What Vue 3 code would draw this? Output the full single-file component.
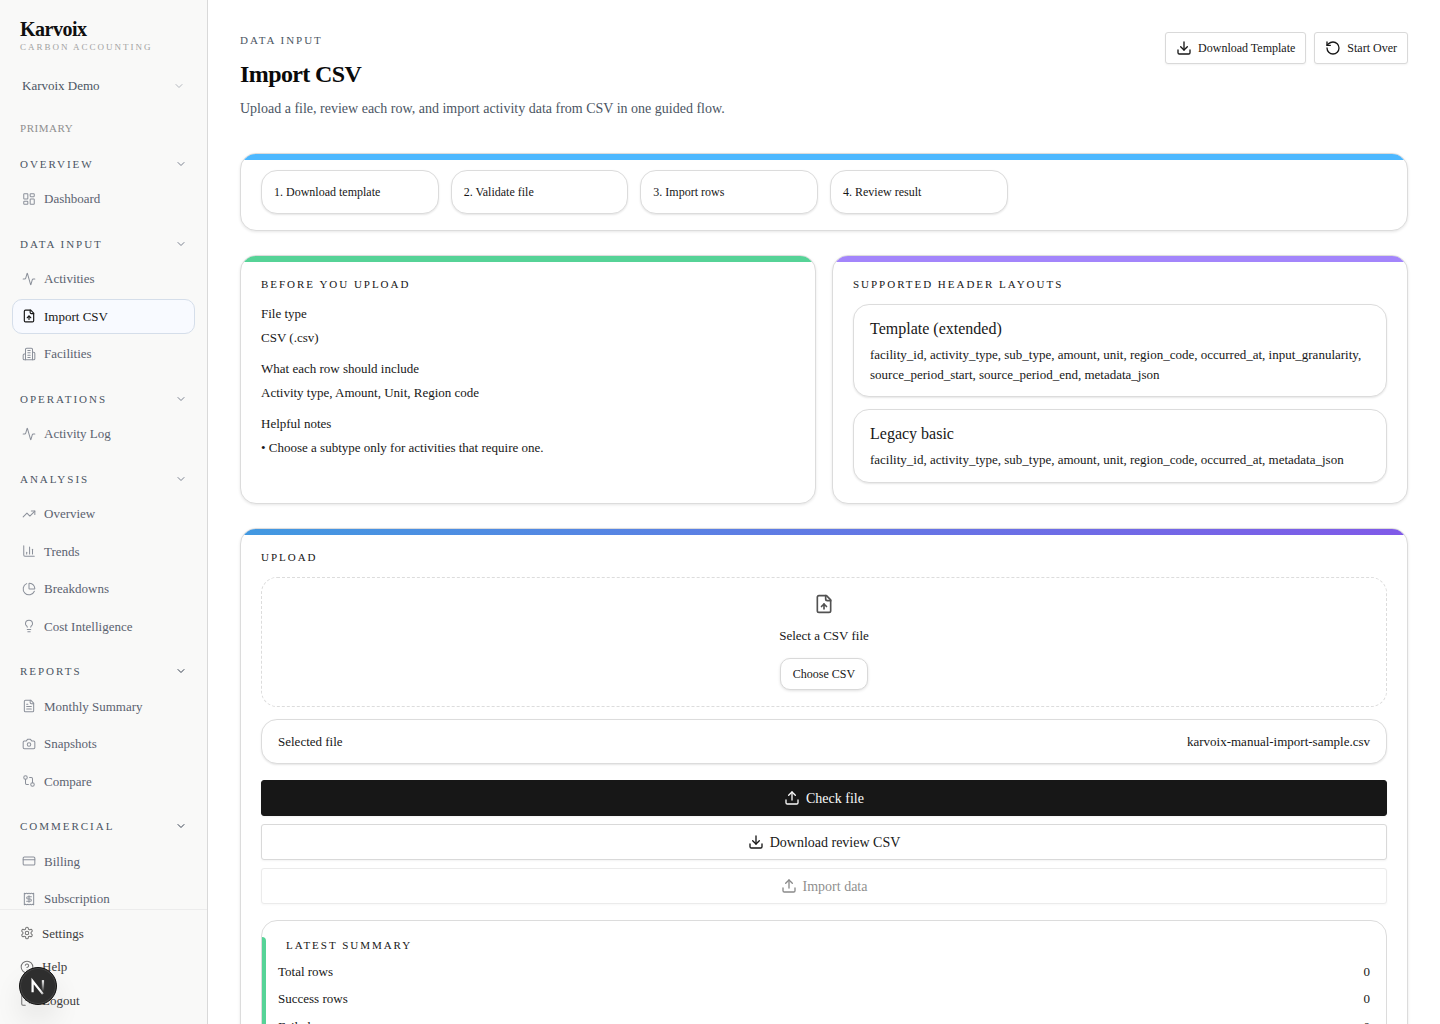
<script setup>
import { ref, reactive } from 'vue'

// 24x24 stroke icons, one entry per path
const icons = {
  chevron: ['m6 9 6 6 6-6'],
  dashboard: ['M4 3h5a1 1 0 0 1 1 1v7a1 1 0 0 1-1 1H4a1 1 0 0 1-1-1V4a1 1 0 0 1 1-1Z', 'M15 3h5a1 1 0 0 1 1 1v3a1 1 0 0 1-1 1h-5a1 1 0 0 1-1-1V4a1 1 0 0 1 1-1Z', 'M15 12h5a1 1 0 0 1 1 1v7a1 1 0 0 1-1 1h-5a1 1 0 0 1-1-1v-7a1 1 0 0 1 1-1Z', 'M4 16h5a1 1 0 0 1 1 1v3a1 1 0 0 1-1 1H4a1 1 0 0 1-1-1v-3a1 1 0 0 1 1-1Z'],
  activity: ['M22 12h-2.48a2 2 0 0 0-1.93 1.46l-2.35 8.36a.25.25 0 0 1-.48 0L9.24 2.18a.25.25 0 0 0-.48 0l-2.35 8.36A2 2 0 0 1 4.49 12H2'],
  fileUp: ['M15 2H6a2 2 0 0 0-2 2v16a2 2 0 0 0 2 2h12a2 2 0 0 0 2-2V7Z', 'M14 2v4a2 2 0 0 0 2 2h4', 'M12 12v6', 'm15 15-3-3-3 3'],
  building: ['M6 22V4a2 2 0 0 1 2-2h8a2 2 0 0 1 2 2v18Z', 'M6 12H4a2 2 0 0 0-2 2v6a2 2 0 0 0 2 2h2', 'M18 9h2a2 2 0 0 1 2 2v9a2 2 0 0 1-2 2h-2', 'M10 6h4', 'M10 10h4', 'M10 14h4', 'M10 18h4'],
  trending: ['m22 7-8.5 8.5-5-5L2 17', 'M16 7h6v6'],
  bars: ['M3 3v16a2 2 0 0 0 2 2h16', 'M18 17V9', 'M13 17V5', 'M8 17v-3'],
  pie: ['M21 12c.552 0 1.005-.449.95-.998a10 10 0 0 0-8.953-8.951c-.55-.055-.998.398-.998.95v8a1 1 0 0 0 1 1z', 'M21.21 15.89A10 10 0 1 1 8 2.83'],
  bulb: ['M15 14c.2-1 .7-1.7 1.5-2.5 1-.9 1.5-2.2 1.5-3.5A6 6 0 0 0 6 8c0 1 .2 2.2 1.5 3.5.7.7 1.3 1.5 1.5 2.5', 'M9 18h6', 'M10 22h4'],
  fileText: ['M15 2H6a2 2 0 0 0-2 2v16a2 2 0 0 0 2 2h12a2 2 0 0 0 2-2V7Z', 'M14 2v4a2 2 0 0 0 2 2h4', 'M10 9H8', 'M16 13H8', 'M16 17H8'],
  camera: ['M14.5 4h-5L7 7H4a2 2 0 0 0-2 2v9a2 2 0 0 0 2 2h16a2 2 0 0 0 2-2V9a2 2 0 0 0-2-2h-3l-2.5-3z', 'M12 10a3 3 0 1 0 0 6 3 3 0 0 0 0-6Z'],
  compare: ['M18 15a3 3 0 1 0 0 6 3 3 0 0 0 0-6Z', 'M6 3a3 3 0 1 0 0 6 3 3 0 0 0 0-6Z', 'M13 6h3a2 2 0 0 1 2 2v7', 'M11 18H8a2 2 0 0 1-2-2V9'],
  card: ['M4 5h16a2 2 0 0 1 2 2v10a2 2 0 0 1-2 2H4a2 2 0 0 1-2-2V7a2 2 0 0 1 2-2Z', 'M2 10h20'],
  receipt: ['M4 2v20l2-1 2 1 2-1 2 1 2-1 2 1 2-1 2 1V2l-2 1-2-1-2 1-2-1-2 1-2-1-2 1Z', 'M16 8h-6a2 2 0 1 0 0 4h4a2 2 0 1 1 0 4H8', 'M12 17.5v-11'],
  settings: ['M12.22 2h-.44a2 2 0 0 0-2 2v.18a2 2 0 0 1-1 1.73l-.43.25a2 2 0 0 1-2 0l-.15-.08a2 2 0 0 0-2.73.73l-.22.38a2 2 0 0 0 .73 2.73l.15.1a2 2 0 0 1 1 1.72v.51a2 2 0 0 1-1 1.74l-.15.09a2 2 0 0 0-.73 2.73l.22.38a2 2 0 0 0 2.73.73l.15-.08a2 2 0 0 1 2 0l.43.25a2 2 0 0 1 1 1.73V20a2 2 0 0 0 2 2h.44a2 2 0 0 0 2-2v-.18a2 2 0 0 1 1-1.73l.43-.25a2 2 0 0 1 2 0l.15.08a2 2 0 0 0 2.73-.73l.22-.39a2 2 0 0 0-.73-2.73l-.15-.08a2 2 0 0 1-1-1.74v-.5a2 2 0 0 1 1-1.74l.15-.09a2 2 0 0 0 .73-2.73l-.22-.38a2 2 0 0 0-2.73-.73l-.15.08a2 2 0 0 1-2 0l-.43-.25a2 2 0 0 1-1-1.73V4a2 2 0 0 0-2-2z', 'M12 9a3 3 0 1 0 0 6 3 3 0 0 0 0-6Z'],
  help: ['M12 2a10 10 0 1 0 0 20 10 10 0 0 0 0-20Z', 'M9.09 9a3 3 0 0 1 5.83 1c0 2-3 3-3 3', 'M12 17h.01'],
  logout: ['M9 21H5a2 2 0 0 1-2-2V5a2 2 0 0 1 2-2h4', 'm16 17 5-5-5-5', 'M21 12H9'],
  download: ['M21 15v4a2 2 0 0 1-2 2H5a2 2 0 0 1-2-2v-4', 'm7 10 5 5 5-5', 'M12 15V3'],
  upload: ['M21 15v4a2 2 0 0 1-2 2H5a2 2 0 0 1-2-2v-4', 'm17 8-5-5-5 5', 'M12 3v12'],
  reset: ['M3 12a9 9 0 1 0 9-9 9.75 9.75 0 0 0-6.74 2.74L3 8', 'M3 3v5h5']
}

const sections = reactive([
  { title: 'Overview', open: true, items: [{ label: 'Dashboard', icon: 'dashboard' }] },
  {
    title: 'Data Input',
    open: true,
    items: [
      { label: 'Activities', icon: 'activity' },
      { label: 'Import CSV', icon: 'fileUp', active: true },
      { label: 'Facilities', icon: 'building' }
    ]
  },
  { title: 'Operations', open: true, items: [{ label: 'Activity Log', icon: 'activity' }] },
  {
    title: 'Analysis',
    open: true,
    items: [
      { label: 'Overview', icon: 'trending' },
      { label: 'Trends', icon: 'bars' },
      { label: 'Breakdowns', icon: 'pie' },
      { label: 'Cost Intelligence', icon: 'bulb' }
    ]
  },
  {
    title: 'Reports',
    open: true,
    strong: true,
    items: [
      { label: 'Monthly Summary', icon: 'fileText' },
      { label: 'Snapshots', icon: 'camera' },
      { label: 'Compare', icon: 'compare' }
    ]
  },
  {
    title: 'Commercial',
    open: true,
    strong: true,
    items: [
      { label: 'Billing', icon: 'card' },
      { label: 'Subscription', icon: 'receipt' }
    ]
  }
])

const footerLinks = [
  { label: 'Settings', icon: 'settings' },
  { label: 'Help', icon: 'help' },
  { label: 'Logout', icon: 'logout' }
]

const steps = ['Download template', 'Validate file', 'Import rows', 'Review result']

const notes = [
  { term: 'File type', text: 'CSV (.csv)' },
  { term: 'What each row should include', text: 'Activity type, Amount, Unit, Region code' },
  { term: 'Helpful notes', text: '• Choose a subtype only for activities that require one.' }
]

const layouts = [
  {
    name: 'Template (extended)',
    columns: 'facility_id, activity_type, sub_type, amount, unit, region_code, occurred_at, input_granularity, source_period_start, source_period_end, metadata_json'
  },
  {
    name: 'Legacy basic',
    columns: 'facility_id, activity_type, sub_type, amount, unit, region_code, occurred_at, metadata_json'
  }
]

const summary = [
  { label: 'Total rows', value: 0 },
  { label: 'Success rows', value: 0 },
  { label: 'Failed rows', value: 0 }
]

const fileInput = ref(null)
const fileName = ref('karvoix-manual-import-sample.csv')

function onFileChange(e) {
  const file = e.target.files[0]
  if (file) fileName.value = file.name
}
</script>

<template>
  <div class="app">
    <aside class="sidebar">
      <div class="brand">
        <div class="brand-name">Karvoix</div>
        <div class="brand-sub">CARBON ACCOUNTING</div>
      </div>

      <button type="button" class="org">
        <span>Karvoix Demo</span>
        <svg class="icon chevron" viewBox="0 0 24 24"><path v-for="d in icons.chevron" :key="d" :d="d" /></svg>
      </button>

      <nav class="nav">
        <div class="nav-label">PRIMARY</div>
        <div v-for="section in sections" :key="section.title" class="nav-section">
          <button type="button" class="nav-heading" :class="{ strong: section.strong }" @click="section.open = !section.open">
            <span>{{ section.title }}</span>
            <svg class="icon chevron" viewBox="0 0 24 24"><path v-for="d in icons.chevron" :key="d" :d="d" /></svg>
          </button>
          <div v-if="section.open" class="nav-items">
            <a v-for="item in section.items" :key="item.label" href="#" class="nav-item" :class="{ active: item.active }">
              <svg class="icon nav-icon" viewBox="0 0 24 24"><path v-for="d in icons[item.icon]" :key="d" :d="d" /></svg>
              {{ item.label }}
            </a>
          </div>
        </div>
      </nav>

      <div class="sidebar-footer">
        <a v-for="link in footerLinks" :key="link.label" href="#" class="footer-link">
          <svg class="icon nav-icon" viewBox="0 0 24 24"><path v-for="d in icons[link.icon]" :key="d" :d="d" /></svg>
          {{ link.label }}
        </a>
      </div>
    </aside>

    <main class="main">
      <header class="page-header">
        <div>
          <div class="eyebrow">DATA INPUT</div>
          <h1>Import CSV</h1>
          <p class="subtitle">Upload a file, review each row, and import activity data from CSV in one guided flow.</p>
        </div>
        <div class="header-actions">
          <button type="button" class="btn btn-sm">
            <svg class="icon btn-icon" viewBox="0 0 24 24"><path v-for="d in icons.download" :key="d" :d="d" /></svg>
            Download Template
          </button>
          <button type="button" class="btn btn-sm">
            <svg class="icon btn-icon" viewBox="0 0 24 24"><path v-for="d in icons.reset" :key="d" :d="d" /></svg>
            Start Over
          </button>
        </div>
      </header>

      <section class="card card-blue card-steps">
        <div class="steps">
          <div v-for="(step, i) in steps" :key="step" class="box step">{{ i + 1 }}. {{ step }}</div>
        </div>
      </section>

      <div class="columns">
        <section class="card card-green">
          <h2>BEFORE YOU UPLOAD</h2>
          <dl class="notes">
            <div v-for="note in notes" :key="note.term" class="note">
              <dt>{{ note.term }}</dt>
              <dd>{{ note.text }}</dd>
            </div>
          </dl>
        </section>

        <section class="card card-purple">
          <h2>SUPPORTED HEADER LAYOUTS</h2>
          <div class="layouts">
            <div v-for="layout in layouts" :key="layout.name" class="box layout">
              <h3>{{ layout.name }}</h3>
              <p>{{ layout.columns }}</p>
            </div>
          </div>
        </section>
      </div>

      <section class="card card-gradient">
        <h2>UPLOAD</h2>
        <div class="dropzone">
          <svg class="icon drop-icon" viewBox="0 0 24 24"><path v-for="d in icons.fileUp" :key="d" :d="d" /></svg>
          <label for="csv-file">Select a CSV file</label>
          <input id="csv-file" ref="fileInput" type="file" accept=".csv" hidden @change="onFileChange" />
          <button type="button" class="btn btn-sm btn-round" @click="fileInput.click()">Choose CSV</button>
        </div>

        <div class="box selected">
          <span>Selected file</span>
          <span>{{ fileName }}</span>
        </div>

        <div class="actions">
          <button type="button" class="btn btn-primary">
            <svg class="icon btn-icon" viewBox="0 0 24 24"><path v-for="d in icons.upload" :key="d" :d="d" /></svg>
            Check file
          </button>
          <button type="button" class="btn">
            <svg class="icon btn-icon" viewBox="0 0 24 24"><path v-for="d in icons.download" :key="d" :d="d" /></svg>
            Download review CSV
          </button>
          <button type="button" class="btn" disabled>
            <svg class="icon btn-icon" viewBox="0 0 24 24"><path v-for="d in icons.upload" :key="d" :d="d" /></svg>
            Import data
          </button>
        </div>

        <div class="box summary">
          <h2>LATEST SUMMARY</h2>
          <dl>
            <div v-for="row in summary" :key="row.label" class="summary-row">
              <dt>{{ row.label }}</dt>
              <dd>{{ row.value }}</dd>
            </div>
          </dl>
        </div>
      </section>
    </main>

    <button type="button" class="dev-badge" aria-label="Dev tools">
      <svg viewBox="0 0 40 40" fill="none">
        <defs>
          <linearGradient id="n-diag" x1="22" y1="24" x2="27" y2="30" gradientUnits="userSpaceOnUse">
            <stop stop-color="#fff" />
            <stop offset="0.6" stop-color="#fff" stop-opacity="0.8" />
            <stop offset="1" stop-color="#fff" stop-opacity="0" />
          </linearGradient>
          <linearGradient id="n-stem" x1="26" y1="13" x2="26" y2="26" gradientUnits="userSpaceOnUse">
            <stop stop-color="#fff" />
            <stop offset="1" stop-color="#fff" stop-opacity="0" />
          </linearGradient>
        </defs>
        <path d="M14 27V14.5L25.5 29" stroke="url(#n-diag)" stroke-width="2.5" />
        <path d="M25.5 13.5V26" stroke="url(#n-stem)" stroke-width="2.5" />
      </svg>
    </button>
  </div>
</template>

<style>
body {
  margin: 0;
}
</style>

<style scoped>
* {
  box-sizing: border-box;
}

.app {
  display: flex;
  height: 100vh;
  background: #fff;
  color: #171717;
  font-family: 'Liberation Serif', 'Times New Roman', serif;
  font-size: 13px;
  line-height: 1.5;
}

h1, h2, h3, p, dl, dd {
  margin: 0;
}

button {
  font: inherit;
  color: inherit;
  cursor: pointer;
}

a {
  color: inherit;
  text-decoration: none;
}

.icon {
  flex-shrink: 0;
  fill: none;
  stroke: currentColor;
  stroke-width: 2;
  stroke-linecap: round;
  stroke-linejoin: round;
}

/* Sidebar */
.sidebar {
  display: flex;
  flex-direction: column;
  flex-shrink: 0;
  width: 208px;
  padding-top: 16px;
  background: #f9f9f8;
  border-right: 1px solid #d9d9d9;
}

.brand {
  padding: 0 20px;
}

.brand-name {
  font-size: 20px;
  font-weight: 600;
  line-height: 26px;
  letter-spacing: -0.025em;
  color: #0f0f0f;
}

.brand-sub {
  font-size: 9px;
  line-height: 10px;
  letter-spacing: 0.22em;
  color: #a1a1a1;
}

.org {
  display: flex;
  align-items: center;
  justify-content: space-between;
  margin: 16px 12px 0;
  padding: 8px 10px;
  border: 0;
  background: none;
  color: #4b5563;
}

.org .chevron {
  color: #b4b8bf;
}

.chevron {
  width: 12px;
  height: 12px;
}

.nav {
  flex: 1;
  min-height: 0;
  padding: 16px 12px;
  overflow-y: auto;
  scrollbar-width: none;
}

.nav-label {
  margin-bottom: 16px;
  padding: 0 8px;
  font-size: 11px;
  line-height: 17px;
  letter-spacing: 0.05em;
  color: #8f8f8f;
}

.nav-section {
  margin-bottom: 16px;
}

.nav-heading {
  display: flex;
  align-items: center;
  justify-content: space-between;
  width: 100%;
  margin-bottom: 5px;
  padding: 3px 8px 4px;
  border: 0;
  background: none;
  font-size: 11px;
  letter-spacing: 0.18em;
  text-transform: uppercase;
  color: #4b5563;
}

.nav-heading .chevron {
  color: #7b8290;
}

.nav-heading.strong .chevron {
  color: #374151;
}

.nav-items {
  display: flex;
  flex-direction: column;
  gap: 2px;
}

.nav-item {
  display: flex;
  align-items: center;
  gap: 8px;
  padding: 7px 9px;
  border: 1px solid transparent;
  border-radius: 10px;
  color: #5b6270;
}

.nav-icon {
  width: 14px;
  height: 14px;
  stroke-width: 1.75;
  color: #8b909a;
}

.nav-item.active {
  border-color: #d5deea;
  background: #f8faff;
  color: #171717;
}

.nav-item.active .nav-icon {
  stroke-width: 2;
  color: #171717;
}

.sidebar-footer {
  display: flex;
  flex-direction: column;
  gap: 2px;
  padding: 8px 12px;
  border-top: 1px solid #ececec;
}

.footer-link {
  display: flex;
  align-items: center;
  gap: 8px;
  padding: 6px 8px;
  color: #404040;
}

.footer-link .nav-icon {
  color: #737373;
}

/* Page */
.main {
  flex: 1;
  min-width: 0;
  padding: 32px;
  overflow-y: auto;
  scrollbar-width: none;
}

.page-header {
  display: flex;
  align-items: flex-start;
  justify-content: space-between;
  margin-bottom: 32px;
}

.eyebrow {
  font-size: 11px;
  letter-spacing: 0.18em;
  color: #4b5563;
}

h1 {
  margin: 8px 0 6px;
  font-size: 24px;
  font-weight: 700;
  line-height: 34px;
  letter-spacing: -0.025em;
  color: #0a0a0a;
}

.subtitle {
  font-size: 14px;
  line-height: 24px;
  color: #4b5563;
}

.header-actions {
  display: flex;
  gap: 8px;
}

.btn {
  display: flex;
  align-items: center;
  justify-content: center;
  gap: 6px;
  height: 36px;
  padding: 0 16px;
  border: 1px solid #d9d9d9;
  border-radius: 3px;
  background: #fff;
  box-shadow: 0 1px 2px rgba(0, 0, 0, 0.05);
  font-size: 14px;
}

.btn-sm {
  height: 32px;
  padding: 0 10px;
  font-size: 12px;
}

.btn-round {
  padding: 0 12px;
  border-radius: 10px;
  box-shadow: 0 1px 3px rgba(0, 0, 0, 0.12);
}

.btn-primary {
  border-color: #171717;
  background: #171717;
  color: #fafafa;
}

.btn:disabled {
  opacity: 0.5;
  cursor: default;
}

.btn-icon {
  width: 16px;
  height: 16px;
}

.card {
  position: relative;
  padding: 20px;
  border: 1px solid #dcdcdc;
  border-radius: 16px;
  background: #fff;
  box-shadow: 0 1px 3px rgba(0, 0, 0, 0.1);
  overflow: hidden;
}

/* colored strip along the top edge */
.card::before {
  content: '';
  position: absolute;
  top: 0;
  left: 0;
  right: 0;
  height: 6px;
}

.card-blue::before { background: #4db8ff; }
.card-green::before { background: #56d397; }
.card-purple::before { background: #a385fb; }
.card-gradient::before { background: linear-gradient(90deg, #4299e1, #805ae8); }

.card-steps {
  padding: 16px 20px;
}

.card h2 {
  font-size: 11px;
  font-weight: 400;
  letter-spacing: 0.18em;
}

.box {
  border: 1px solid #dcdcdc;
  border-radius: 16px;
  background: #fff;
  box-shadow: 0 1px 2px rgba(0, 0, 0, 0.1);
}

.steps {
  display: grid;
  grid-template-columns: repeat(6, 1fr);
  gap: 12px;
}

.step {
  padding: 12px;
  font-size: 12px;
}

.columns {
  display: grid;
  grid-template-columns: 1fr 1fr;
  gap: 16px;
  margin: 24px 0;
}

.notes,
.layouts {
  display: flex;
  flex-direction: column;
  gap: 12px;
  margin-top: 12px;
}

.note dd {
  margin-top: 4px;
}

.layout {
  padding: 12px 16px;
}

.layout h3 {
  margin-bottom: 4px;
  font-size: 16px;
  font-weight: 400;
}

.dropzone {
  display: flex;
  flex-direction: column;
  align-items: center;
  gap: 12px;
  margin: 12px 0;
  padding: 16px;
  border: 1px dashed #dcdcdc;
  border-radius: 16px;
}

.drop-icon {
  width: 20px;
  height: 20px;
  color: #525252;
}

.selected {
  display: flex;
  justify-content: space-between;
  padding: 12px 16px;
}

.actions {
  display: flex;
  flex-direction: column;
  gap: 8px;
  margin: 16px 0;
}

.summary {
  position: relative;
  padding: 16px;
  box-shadow: none;
}

.summary::before {
  content: '';
  position: absolute;
  top: 16px;
  bottom: 16px;
  left: 0;
  width: 4px;
  border-radius: 0 4px 4px 0;
  background: #56d397;
}

.summary h2 {
  padding-left: 8px;
}

.summary-row {
  display: flex;
  justify-content: space-between;
  margin-top: 8px;
}

.dev-badge {
  position: fixed;
  left: 19px;
  bottom: 19px;
  width: 38px;
  height: 38px;
  padding: 0;
  border: 1px solid #111;
  border-radius: 50%;
  background: #2e2e2e;
  box-shadow: inset 0 0 0 1px #454545, 0 16px 32px -8px rgba(0, 0, 0, 0.24);
}

.dev-badge svg {
  display: block;
  width: 36px;
  height: 36px;
}
</style>
